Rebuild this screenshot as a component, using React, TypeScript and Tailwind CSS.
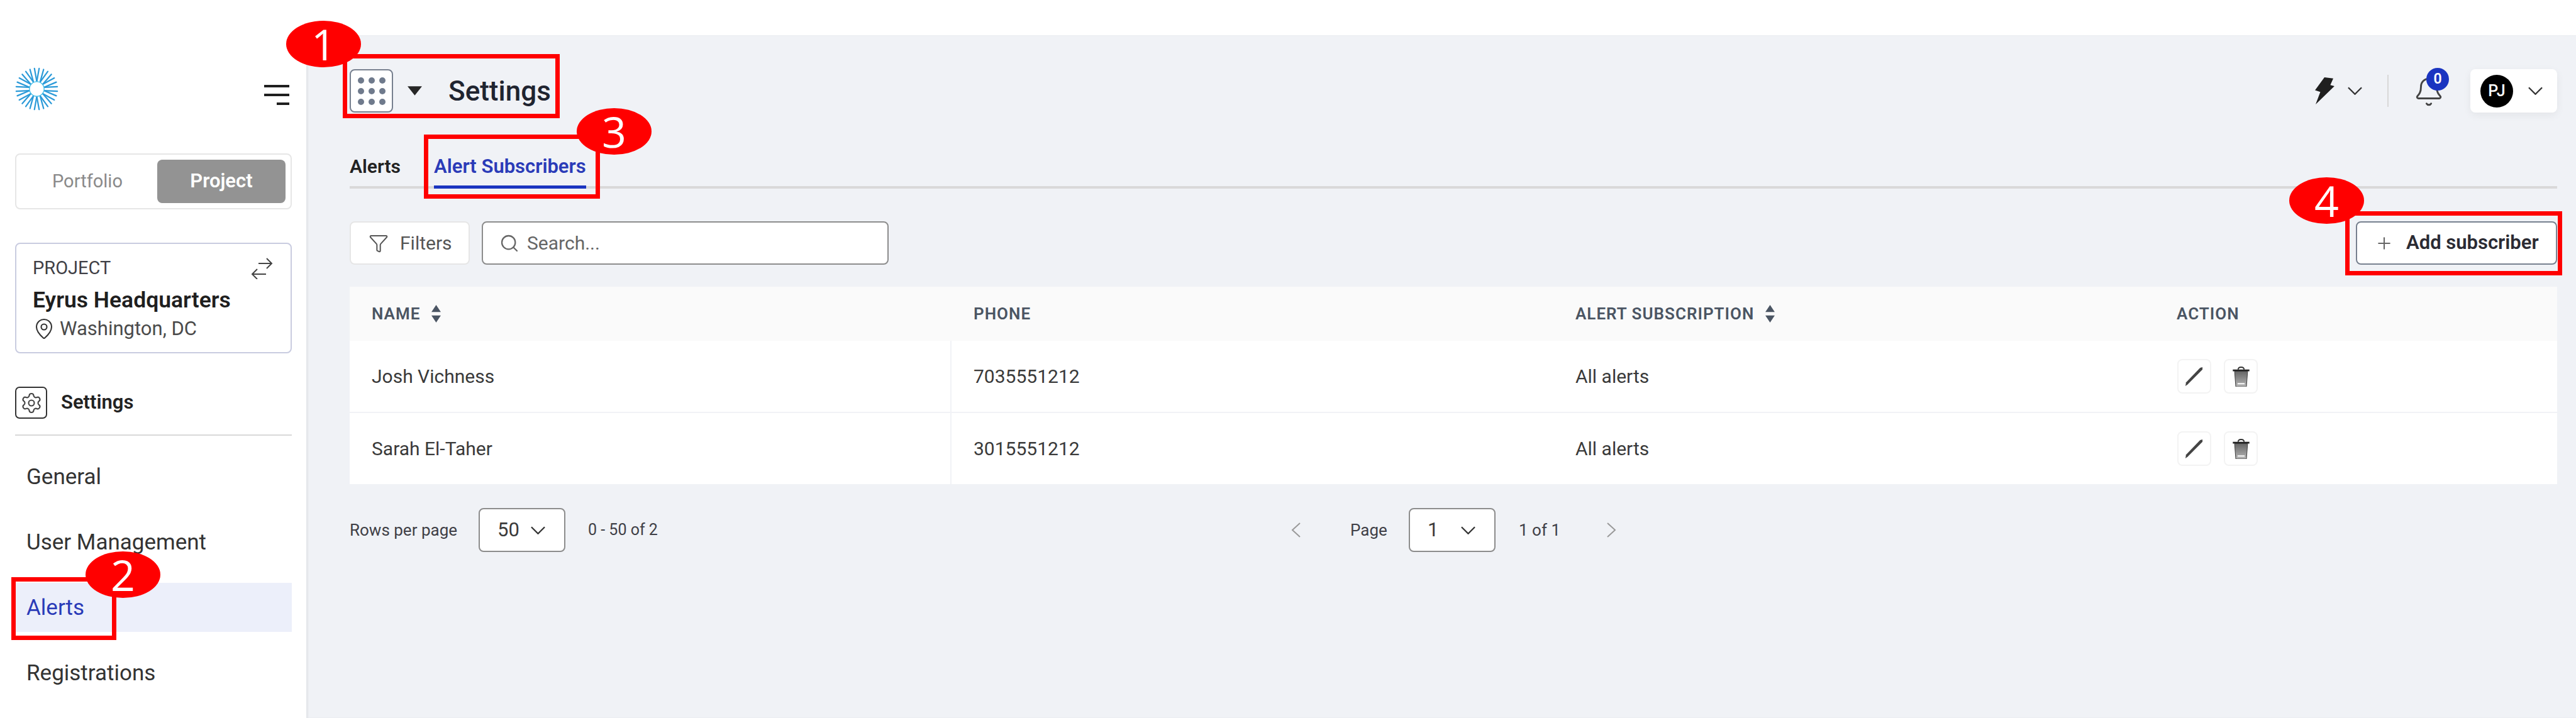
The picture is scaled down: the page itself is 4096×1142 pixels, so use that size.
import { Bell, Funnel, MapPin, Plus, Search, Settings } from "lucide-react";

const navItems = ["General", "User Management", "Alerts", "Registrations"];

const subscribers = [
  { name: "Josh Vichness", phone: "7035551212", subscription: "All alerts" },
  { name: "Sarah El-Taher", phone: "3015551212", subscription: "All alerts" },
];

function Logo() {
  const forks = Array.from({ length: 14 }, (_, i) => (i * 360) / 14);
  return (
    <svg viewBox="-37 -37 74 74" className="h-[69px] w-[69px]">
      {forks.map((a) => (
        <g key={a} transform={`rotate(${a})`} stroke="#2b9ad8" strokeWidth="2.4" strokeLinecap="round">
          <line x1="0" y1="-13" x2="-4" y2="-35" />
          <line x1="0" y1="-13" x2="4" y2="-35" />
        </g>
      ))}
      <circle r="12.5" fill="white" stroke="#45bfe8" strokeWidth="1.5" />
    </svg>
  );
}

function Hamburger() {
  return (
    <div className="mt-[28px] flex w-[40px] flex-col items-end gap-[10px]">
      <div className="h-[4px] w-full bg-[#1f1f1f]" />
      <div className="h-[4px] w-full bg-[#1f1f1f]" />
      <div className="h-[4px] w-[20px] bg-[#1f1f1f]" />
    </div>
  );
}

function SwapIcon() {
  return (
    <svg viewBox="0 0 35 34" fill="none" stroke="#444" strokeWidth="2" className="absolute right-[28px] top-[22px] h-[34px] w-[35px]">
      <path d="M12 9 H33 M25 1 L33 9 L25 17" />
      <path d="M2 26 H24 M10 18 L2 26 L10 34" />
    </svg>
  );
}

function Sidebar() {
  return (
    <aside className="flex w-[487px] shrink-0 flex-col pl-[24px] pr-[23px] pt-[107px]">
      <div className="flex h-[69px] items-start justify-between pr-[4px]">
        <Logo />
        <Hamburger />
      </div>

      <div className="mt-[68px] flex h-[89px] items-center justify-between rounded-[8px] border-2 border-[#e6e6e6] pl-[2px] pr-[8px]">
        <span className="w-[223px] text-center text-[29px] text-[#8a8a8a]">Portfolio</span>
        <span className="flex h-[69px] w-[205px] items-center justify-center rounded-[8px] bg-[#939393] text-[31px] font-semibold text-white">
          Project
        </span>
      </div>

      <div className="relative mt-[53px] flex h-[176px] flex-col rounded-[8px] border-2 border-[#c9cce0] pl-[26px] pt-[22px]">
        <span className="text-[29px] leading-[32px] text-[#3f3f46]">PROJECT</span>
        <span className="mt-[13px] text-[35.5px] font-semibold leading-[44px] text-[#1f1f1f]">Eyrus Headquarters</span>
        <div className="mt-[6px] flex items-center gap-[7px]">
          <MapPin className="h-[36px] w-[36px] text-[#333]" strokeWidth={1.4} />
          <span className="text-[31px] leading-[36px] text-[#4b4b4b]">Washington, DC</span>
        </div>
        <SwapIcon />
      </div>

      <div className="mt-[53px] flex h-[51px] items-center gap-[22px]">
        <div className="flex h-[51px] w-[51px] items-center justify-center rounded-[7px] border-2 border-[#333]">
          <Settings className="h-[36px] w-[36px] text-[#444]" strokeWidth={1.4} />
        </div>
        <span className="text-[31px] font-semibold text-[#222]">Settings</span>
      </div>
      <div className="mt-[25px] h-[2px] bg-[#d9d9d9]" />

      <nav className="mt-[26px] flex flex-col gap-[26px]">
        {navItems.map((item) => (
          <div
            key={item}
            className={
              item === "Alerts"
                ? "flex h-[78px] items-center bg-[#eceffa] pl-[18px] pt-[2px] text-[35px] text-[#2a3bb8]"
                : "flex h-[78px] items-center pl-[18px] pt-[2px] text-[35px] text-[#333]"
            }
          >
            {item}
          </div>
        ))}
      </nav>
    </aside>
  );
}

function Bolt() {
  return (
    <svg viewBox="0 0 34 46" className="h-[43px] w-[32px]">
      <path d="M17 0 L32 2 L27 13 L34 15 L2 46 L10 25 L1 22 Z" fill="#1f1f1f" />
    </svg>
  );
}

function Chevron() {
  return (
    <svg viewBox="0 0 24 13" fill="none" stroke="#333" strokeWidth="2.4" className="h-[13px] w-[23px]">
      <path d="M1 1 L12 12 L23 1" />
    </svg>
  );
}

function TopBar() {
  return (
    <div className="flex h-[69px] items-center justify-between">
      <div className="flex items-center">
        <div className="grid h-[69px] w-[69px] grid-cols-[17px_17px_17px] auto-rows-[17px] place-content-center place-items-center rounded-[8px] border-2 border-[#77808f] bg-white">
          {Array.from({ length: 9 }, (_, i) => (
            <div key={i} className="h-[10px] w-[10px] rounded-full bg-[#6f7a8c]" />
          ))}
        </div>
        <svg viewBox="0 0 24 15" className="ml-[23px] h-[15px] w-[23px]">
          <path d="M0 0 H24 L12 15 Z" fill="#262626" />
        </svg>
        <span className="ml-[42px] text-[44px] font-medium text-[#1f2430]">Settings</span>
      </div>

      <div className="flex items-center">
        <Bolt />
        <div className="ml-[21px]">
          <Chevron />
        </div>
        <div className="ml-[40px] h-[51px] w-[2px] bg-[#d8d8d8]" />
        <div className="relative ml-[45px] mr-[46px] mt-[3px] h-[42px] w-[39px]">
          <Bell className="absolute -left-[6px] -top-[4px] h-[50px] w-[50px] text-[#444]" strokeWidth={1.4} />
          <span className="absolute -top-[17px] left-[15px] flex h-[36px] w-[36px] items-center justify-center rounded-full bg-[#1a34c0] text-[23px] font-semibold text-white">
            0
          </span>
        </div>
        <div className="flex h-[69px] w-[138px] items-center rounded-[8px] bg-white pl-[16px] shadow-[0_4px_14px_rgba(0,0,0,0.06)]">
          <span className="flex h-[52px] w-[52px] items-center justify-center rounded-full bg-black text-[25px] font-medium text-white">
            PJ
          </span>
          <div className="ml-[24px]">
            <Chevron />
          </div>
        </div>
      </div>
    </div>
  );
}

function Tabs() {
  return (
    <div className="mt-[65px] flex h-[56px] gap-[53px] border-b-[4px] border-[#d9d9d9]">
      <span className="text-[30px] font-semibold leading-[42px] text-[#222]">Alerts</span>
      <span className="-mb-[4px] h-[56px] border-b-[5px] border-[#1a34c0] text-[31px] font-semibold leading-[42px] text-[#2a3bb8]">
        Alert Subscribers
      </span>
    </div>
  );
}

function Toolbar() {
  return (
    <div className="mt-[52px] flex h-[69px] items-center">
      <button className="flex h-full w-[191px] items-center rounded-[8px] border-2 border-[#e6e6e6] bg-white pl-[28px] text-[30px] text-[#555]">
        <Funnel className="h-[32px] w-[32px]" strokeWidth={1.5} />
        <span className="ml-[18px]">Filters</span>
      </button>
      <div className="ml-[19px] flex h-full w-[647px] items-center rounded-[8px] border-2 border-[#8c8c8c] bg-white pl-[26px] text-[30px] text-[#666]">
        <Search className="h-[32px] w-[32px]" strokeWidth={1.7} />
        <span className="ml-[12px]">Search...</span>
      </div>
      <button className="ml-auto flex h-full w-[320px] items-center rounded-[8px] border-2 border-[#77808f] bg-white pl-[28px] text-[31px] font-semibold text-[#2b2b33]">
        <Plus className="h-[30px] w-[30px] text-[#666]" strokeWidth={1.7} />
        <span className="ml-[20px]">Add subscriber</span>
      </button>
    </div>
  );
}

function SortArrows() {
  return (
    <svg viewBox="0 0 16 30" className="ml-[18px] h-[28px] w-[15px]">
      <path d="M8 0 L16 12 H0 Z M8 30 L0 18 H16 Z" fill="#4b5563" />
    </svg>
  );
}

function HeaderCell({ label, sortable }: { label: string; sortable?: boolean }) {
  return (
    <div className="flex items-center pl-[35px] text-[26px] font-semibold tracking-[1px] text-[#4b5563]">
      {label}
      {sortable && <SortArrows />}
    </div>
  );
}

function IconButton({ children }: { children: React.ReactNode }) {
  return (
    <div className="flex h-[55px] w-[54px] items-center justify-center rounded-[8px] border-2 border-[#f3f3f3]">
      {children}
    </div>
  );
}

function PencilIcon() {
  return (
    <svg viewBox="0 0 30 32" className="h-[30px] w-[28px]">
      <path d="M0 32 L1 26 L25 1 L29 0 L29 4 L4 29 Z" fill="#444" />
    </svg>
  );
}

function TrashIcon() {
  return (
    <svg viewBox="0 0 28 34" className="h-[32px] w-[27px]">
      <defs>
        <linearGradient id="trash" x1="0" y1="0" x2="0" y2="1">
          <stop offset="0" stopColor="#666" />
          <stop offset="1" stopColor="#b5b5b5" />
        </linearGradient>
      </defs>
      <path d="M9 5 Q9 1 14 1 Q19 1 19 5" fill="none" stroke="#333" strokeWidth="2" />
      <rect x="0" y="5" width="28" height="3" fill="#222" />
      <path d="M3 8 H25 L23 34 H5 Z" fill="url(#trash)" stroke="#333" strokeWidth="1" />
      <rect x="8" y="28" width="12" height="2" fill="white" />
    </svg>
  );
}

function Table() {
  return (
    <div className="mt-[35px] flex flex-col">
      <div className="grid h-[86px] grid-cols-[957px_957px_956px_640px] bg-[#fafafa]">
        <HeaderCell label="NAME" sortable />
        <HeaderCell label="PHONE" />
        <HeaderCell label="ALERT SUBSCRIPTION" sortable />
        <HeaderCell label="ACTION" />
      </div>
      {subscribers.map((row, i) => (
        <div
          key={row.name}
          className={
            i === 0
              ? "grid h-[115px] grid-cols-[957px_957px_956px_640px] border-b-2 border-[#f1f2f6] bg-white text-[30px] text-[#3a3a3a]"
              : "grid h-[113px] grid-cols-[957px_957px_956px_640px] bg-white text-[30px] text-[#3a3a3a]"
          }
        >
          <div className="flex items-center border-r-2 border-[#f1f2f6] pl-[35px]">{row.name}</div>
          <div className="flex items-center pl-[35px]">{row.phone}</div>
          <div className="flex items-center pl-[35px]">{row.subscription}</div>
          <div className="flex items-center gap-[20px] pl-[36px]">
            <IconButton>
              <PencilIcon />
            </IconButton>
            <IconButton>
              <TrashIcon />
            </IconButton>
          </div>
        </div>
      ))}
    </div>
  );
}

function PageSelect({ value }: { value: string }) {
  return (
    <div className="flex h-[70px] w-[138px] items-center justify-between rounded-[8px] border-2 border-[#8c8c8c] bg-white pl-[28px] pr-[30px] text-[31px] text-[#3a3a3a]">
      {value}
      <Chevron />
    </div>
  );
}

function PageArrow({ d }: { d: string }) {
  return (
    <svg viewBox="0 0 15 24" fill="none" stroke="#999" strokeWidth="2" className="h-[24px] w-[15px]">
      <path d={d} />
    </svg>
  );
}

function Pagination() {
  return (
    <div className="mt-[38px] flex h-[70px] items-center text-[26px] text-[#3f3f46]">
      <div className="flex w-[1497px] items-center">
        <span className="w-[205px]">Rows per page</span>
        <PageSelect value="50" />
        <span className="ml-[36px] text-[25px]">0 - 50 of 2</span>
      </div>
      <PageArrow d="M14 1 L2 12 L14 23" />
      <span className="ml-[79px] w-[93px]">Page</span>
      <PageSelect value="1" />
      <span className="ml-[37px] w-[140px]">1 of 1</span>
      <PageArrow d="M1 1 L13 12 L1 23" />
    </div>
  );
}

function Callout({ label, className }: { label: string; className: string }) {
  return (
    <div
      className={`absolute flex h-[74px] w-[119px] items-center justify-center rounded-[50%] bg-[#ff0000] font-['Open_Sans',sans-serif] text-[68px] leading-none text-white ${className}`}
    >
      {label}
    </div>
  );
}

export default function App() {
  return (
    <div className="relative flex h-[1142px] w-full overflow-hidden bg-white font-['Roboto',sans-serif]">
      <Sidebar />
      <main className="mt-[56px] min-w-0 flex-1 bg-[#f0f2f6] pl-[69px] pr-[30px] pt-[54px] shadow-[inset_3px_0_3px_rgba(0,0,0,0.05)]">
        <TopBar />
        <Tabs />
        <Toolbar />
        <Table />
        <Pagination />
      </main>

      {/* annotation overlays */}
      <div className="absolute left-[545px] top-[86px] h-[102px] w-[345px] border-[7px] border-[#ff0000]" />
      <div className="absolute left-[674px] top-[214px] h-[102px] w-[280px] border-[7px] border-[#ff0000]" />
      <div className="absolute left-[18px] top-[918px] h-[100px] w-[167px] border-[7px] border-[#ff0000]" />
      <div className="absolute left-[3729px] top-[336px] h-[102px] w-[345px] border-[7px] border-[#ff0000]" />
      <Callout label="1" className="left-[455px] top-[33px]" />
      <Callout label="2" className="left-[136px] top-[877px]" />
      <Callout label="3" className="left-[917px] top-[172px]" />
      <Callout label="4" className="left-[3640px] top-[282px]" />
    </div>
  );
}
